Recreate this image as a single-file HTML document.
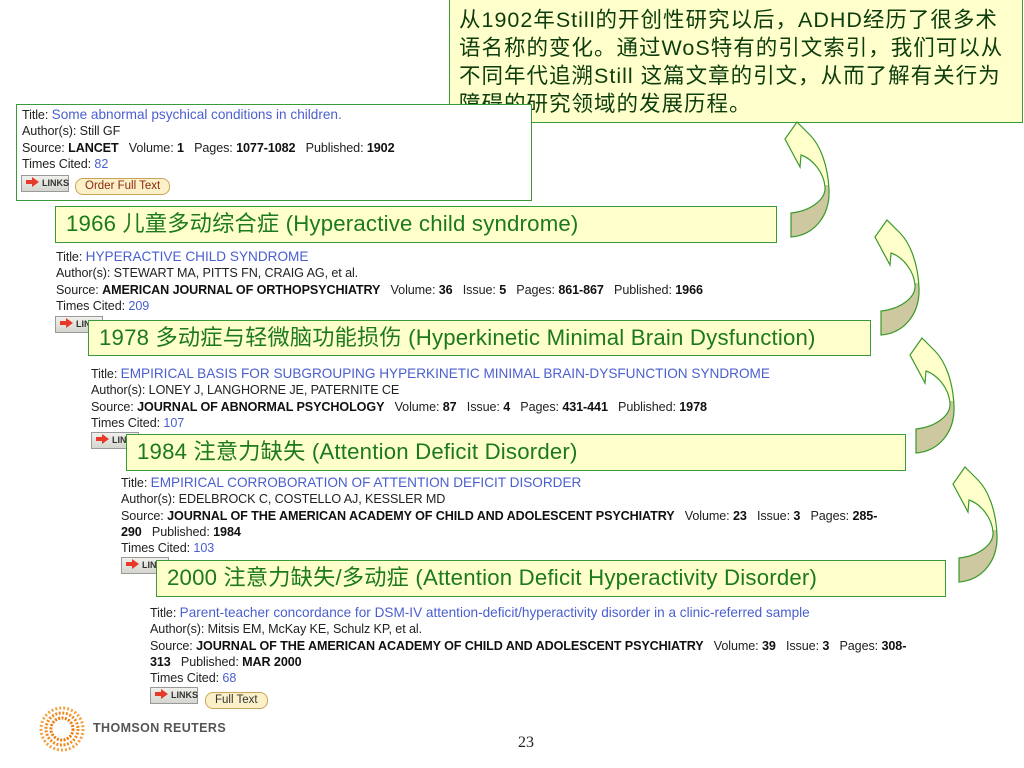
<!DOCTYPE html>
<html><head><meta charset="utf-8">
<style>
body{margin:0;width:1024px;height:768px;background:#fff;position:relative;overflow:hidden;font-family:"Liberation Sans","Noto Sans CJK SC",sans-serif;}
.a{position:absolute;white-space:nowrap;}
.r{font-size:12.6px;color:#222;line-height:16.3px;letter-spacing:-0.1px;}
.r b{color:#111}
.bl{color:#4a5fcf}
.t{font-size:13.6px;letter-spacing:0}
.bg{position:absolute;background:#ffffcc;border:1.5px solid #3a9a3a;box-sizing:border-box;}
.lab{font-size:22.2px;color:#1c7a1c;padding-left:10px;line-height:34px;letter-spacing:0.2px;}
.links{position:absolute;width:48px;height:17px;background:linear-gradient(#f0f0ec,#d6d6d0);border:1px solid #999;box-sizing:border-box;font-size:9px;font-weight:bold;color:#333;line-height:15px;padding-left:20px;}
.links:before{content:"";position:absolute;left:4px;top:4px;width:7px;height:4px;background:#e83a2a;}
.links:after{content:"";position:absolute;left:10px;top:1px;border-left:7px solid #e83a2a;border-top:5px solid transparent;border-bottom:5px solid transparent;}
.ft{position:absolute;height:15px;border:1px solid #c9a55a;border-radius:8px;background:#fbf0c8;font-size:11.5px;color:#8a2a10;line-height:15px;padding:0 9px;}
</style></head><body>

<div class="bg" style="left:449px;top:-2px;width:574px;height:125px;"></div>
<div class="a" style="left:459px;top:6px;font-size:21.5px;letter-spacing:1px;line-height:28px;color:#0d3d0d;">从1902年Still的开创性研究以后，ADHD经历了很多术<br>语名称的变化。通过WoS特有的引文索引，我们可以从<br>不同年代追溯Still 这篇文章的引文，从而了解有关行为<br>障碍的研究领域的发展历程。</div>

<div class="a" style="left:16px;top:104px;width:516px;height:97px;border:1.5px solid #3a9a3a;box-sizing:border-box;background:#fff"></div>
<div class="a r" style="left:22px;top:107px;">Title: <span class="bl t">Some abnormal psychical conditions in children.</span><br>Author(s): Still GF<br>Source: <b>LANCET</b>&nbsp;&nbsp; Volume: <b>1</b>&nbsp;&nbsp; Pages: <b>1077-1082</b>&nbsp;&nbsp; Published: <b>1902</b><br>Times Cited: <span class="bl">82</span></div>
<div class="links" style="left:21px;top:175px;">LINKS</div>
<div class="ft" style="left:75px;top:178px;">Order Full Text</div>

<div class="bg lab" style="left:55px;top:206px;width:722px;height:37px;">1966 儿童多动综合症 (Hyperactive child syndrome)</div>

<div class="a r" style="left:56px;top:249px;">Title: <span class="bl t">HYPERACTIVE CHILD SYNDROME</span><br>Author(s): STEWART MA, PITTS FN, CRAIG AG, et al.<br>Source: <b>AMERICAN JOURNAL OF ORTHOPSYCHIATRY</b>&nbsp;&nbsp; Volume: <b>36</b>&nbsp;&nbsp; Issue: <b>5</b>&nbsp;&nbsp; Pages: <b>861-867</b>&nbsp;&nbsp; Published: <b>1966</b><br>Times Cited: <span class="bl">209</span></div>
<div class="links" style="left:55px;top:316px;">LINKS</div>

<div class="bg lab" style="left:88px;top:320px;width:783px;height:36px;">1978 多动症与轻微脑功能损伤 (Hyperkinetic Minimal Brain Dysfunction)</div>

<div class="a r" style="left:91px;top:366px;">Title: <span class="bl t">EMPIRICAL BASIS FOR SUBGROUPING HYPERKINETIC MINIMAL BRAIN-DYSFUNCTION SYNDROME</span><br>Author(s): LONEY J, LANGHORNE JE, PATERNITE CE<br>Source: <b>JOURNAL OF ABNORMAL PSYCHOLOGY</b>&nbsp;&nbsp; Volume: <b>87</b>&nbsp;&nbsp; Issue: <b>4</b>&nbsp;&nbsp; Pages: <b>431-441</b>&nbsp;&nbsp; Published: <b>1978</b><br>Times Cited: <span class="bl">107</span></div>
<div class="links" style="left:91px;top:432px;">LINKS</div>

<div class="bg lab" style="left:126px;top:434px;width:780px;height:37px;">1984 注意力缺失 (Attention Deficit Disorder)</div>

<div class="a r" style="left:121px;top:475px;">Title: <span class="bl t">EMPIRICAL CORROBORATION OF ATTENTION DEFICIT DISORDER</span><br>Author(s): EDELBROCK C, COSTELLO AJ, KESSLER MD<br>Source: <b>JOURNAL OF THE AMERICAN ACADEMY OF CHILD AND ADOLESCENT PSYCHIATRY</b>&nbsp;&nbsp; Volume: <b>23</b>&nbsp;&nbsp; Issue: <b>3</b>&nbsp;&nbsp; Pages: <b>285-</b><br><b>290</b>&nbsp;&nbsp; Published: <b>1984</b><br>Times Cited: <span class="bl">103</span></div>
<div class="links" style="left:121px;top:557px;">LINKS</div>

<div class="bg lab" style="left:156px;top:560px;width:790px;height:37px;">2000 注意力缺失/多动症 (Attention Deficit Hyperactivity Disorder)</div>

<div class="a r" style="left:150px;top:605px;">Title: <span class="bl t">Parent-teacher concordance for DSM-IV attention-deficit/hyperactivity disorder in a clinic-referred sample</span><br>Author(s): Mitsis EM, McKay KE, Schulz KP, et al.<br>Source: <b>JOURNAL OF THE AMERICAN ACADEMY OF CHILD AND ADOLESCENT PSYCHIATRY</b>&nbsp;&nbsp; Volume: <b>39</b>&nbsp;&nbsp; Issue: <b>3</b>&nbsp;&nbsp; Pages: <b>308-</b><br><b>313</b>&nbsp;&nbsp; Published: <b>MAR 2000</b><br>Times Cited: <span class="bl">68</span></div>
<div class="links" style="left:150px;top:687px;">LINKS</div>
<div class="ft" style="left:205px;top:692px;color:#333;">Full Text</div>

<svg class="a" style="left:0;top:0" width="1024" height="768">
<defs>
<linearGradient id="g" x1="0" y1="0" x2="0" y2="125" gradientUnits="userSpaceOnUse">
<stop offset="0" stop-color="#ffffcc"/><stop offset="0.56" stop-color="#ffffcc"/><stop offset="0.56" stop-color="#cdc8a0"/><stop offset="1" stop-color="#cdc8a0"/></linearGradient>
<path id="ar" d="M17 7 L5 24 L20 52 L21 40 C33 44 44 58 45 72 C46 85 30 96 11 98 L11 122 C35 120 50 100 49 75 C48 50 40 30 30 20 Z" fill="url(#g)" stroke="#3a9a2a" stroke-width="1.2"/>
</defs>
<use href="#ar" x="780" y="115"/>
<use href="#ar" x="870" y="213"/>
<use href="#ar" x="905" y="331"/>
<use href="#ar" x="948" y="460"/>
<g fill="#f08a1a">
<circle cx="62" cy="729" r="21" fill="none" stroke="#f3a040" stroke-width="3" stroke-dasharray="2 2"/>
<circle cx="62" cy="729" r="16" fill="none" stroke="#ee8a20" stroke-width="3" stroke-dasharray="2 1.6"/>
<circle cx="62" cy="729" r="11" fill="none" stroke="#e97d10" stroke-width="3" stroke-dasharray="2 1.4"/>
</g>
</svg>
<div class="a" style="left:93px;top:721px;font-size:12.5px;letter-spacing:0.4px;font-weight:bold;color:#555;">THOMSON REUTERS</div>
<div class="a" style="left:518px;top:734px;font-size:16px;font-family:'Liberation Serif',serif;color:#222;">23</div>
</body></html>
